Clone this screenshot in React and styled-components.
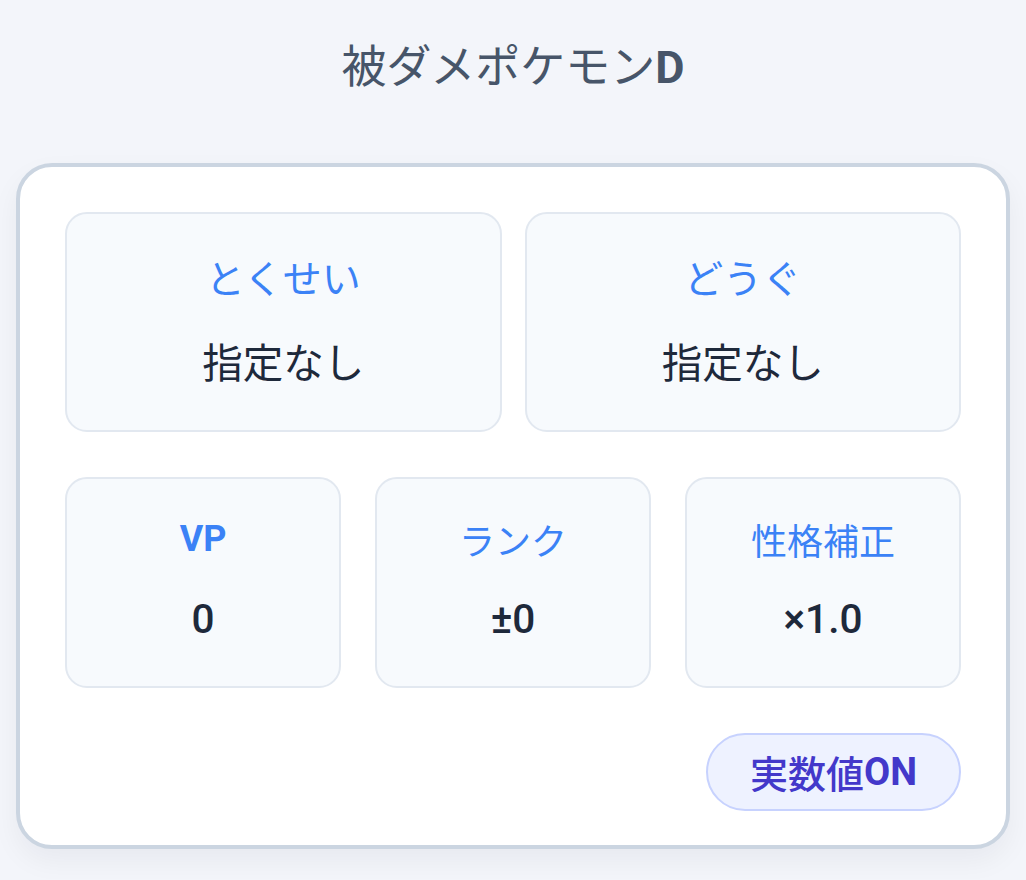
import React from "react";
import styled, { createGlobalStyle } from "styled-components";

const GlobalStyle = createGlobalStyle`
  html, body {
    margin: 0;
    padding: 0;
    background: #f3f5fa;
  }
  body {
    font-family: "Roboto", "Noto Sans CJK JP", "Noto Sans", sans-serif;
    -webkit-font-smoothing: antialiased;
  }
  * { box-sizing: border-box; }
`;

const Page = styled.div`
  padding: 34px 16px 30px;
`;

const Title = styled.h2`
  margin: 0 0 61.5px;
  height: 67.5px;
  text-align: center;
  font-size: 45px;
  line-height: 67.5px;
  font-weight: 400;
  color: #475569;
`;

const Latin = styled.span`
  font-weight: 700;
`;

const Jp = styled.span`
  font-family: "Noto Sans CJK JP", sans-serif;
  font-weight: ${(p) => p.$weight || 400};
  line-height: 1;
`;

const Panel = styled.section`
  background: #ffffff;
  border: 4.5px solid #cbd5e1;
  border-radius: 36px;
  padding: 45px 45px 34px;
  box-shadow: 0 12px 28px rgba(15, 23, 42, 0.05);
`;

const Grid = styled.div`
  display: grid;
  grid-template-columns: repeat(${(p) => p.$cols}, 1fr);
  gap: ${(p) => p.$gap}px;
  margin-bottom: 45px;
`;

const Tile = styled.div`
  display: flex;
  flex-direction: column;
  align-items: center;
  background: #f7fafd;
  border: 2px solid #e2e8f0;
  border-radius: 22px;
  padding: ${(p) => p.$pt}px 16px ${(p) => p.$pb}px;
  gap: ${(p) => p.$gap}px;
`;

const Label = styled.div`
  display: flex;
  align-items: center;
  justify-content: center;
  height: 54px;
  font-size: ${(p) => p.$size || 36}px;
  line-height: 1;
  color: #3b82f6;
  font-weight: 700;
`;

const Value = styled.div`
  display: flex;
  align-items: center;
  justify-content: center;
  height: 61px;
  font-size: 40.5px;
  line-height: 1;
  color: #1e293b;
  font-weight: 500;
`;

const Footer = styled.div`
  display: flex;
  justify-content: flex-end;
`;

const Toggle = styled.button`
  display: flex;
  align-items: center;
  height: 78px;
  padding: 0 42px;
  border-radius: 999px;
  border: 2px solid #c7d2fe;
  background: #eef2ff;
  color: #4338ca;
  font-family: inherit;
  font-size: 38px;
  font-weight: 700;
  line-height: 1;
  cursor: pointer;
`;

const topItems = [
  { label: "とくせい", value: "指定なし" },
  { label: "どうぐ", value: "指定なし" },
];

const bottomItems = [
  { label: "VP", value: "0" },
  { label: "ランク", value: "±0" },
  { label: "性格補正", value: "×1.0" },
];

const isJp = (s) => /[\u3040-\u30ff\u4e00-\u9fff]/.test(s);
const Txt = ({ children }) => (isJp(children) ? <Jp>{children}</Jp> : <span>{children}</span>);

export default function App() {
  return (
    <>
      <GlobalStyle />
      <Page>
        <Title>
          被ダメポケモン<Latin>D</Latin>
        </Title>
        <Panel>
          <Grid $cols={2} $gap={23}>
            {topItems.map((it) => (
              <Tile key={it.label} $pt={35} $pb={38} $gap={28}>
                <Label $size={39}>
                  <Txt>{it.label}</Txt>
                </Label>
                <Value>
                  <Txt>{it.value}</Txt>
                </Value>
              </Tile>
            ))}
          </Grid>
          <Grid $cols={3} $gap={34}>
            {bottomItems.map((it) => (
              <Tile key={it.label} $pt={32.5} $pb={36} $gap={23.5}>
                <Label>
                  <Txt>{it.label}</Txt>
                </Label>
                <Value>
                  <Txt>{it.value}</Txt>
                </Value>
              </Tile>
            ))}
          </Grid>
          <Footer>
            <Toggle type="button">
              <Jp $weight={500}>実数値</Jp>ON
            </Toggle>
          </Footer>
        </Panel>
      </Page>
    </>
  );
}
